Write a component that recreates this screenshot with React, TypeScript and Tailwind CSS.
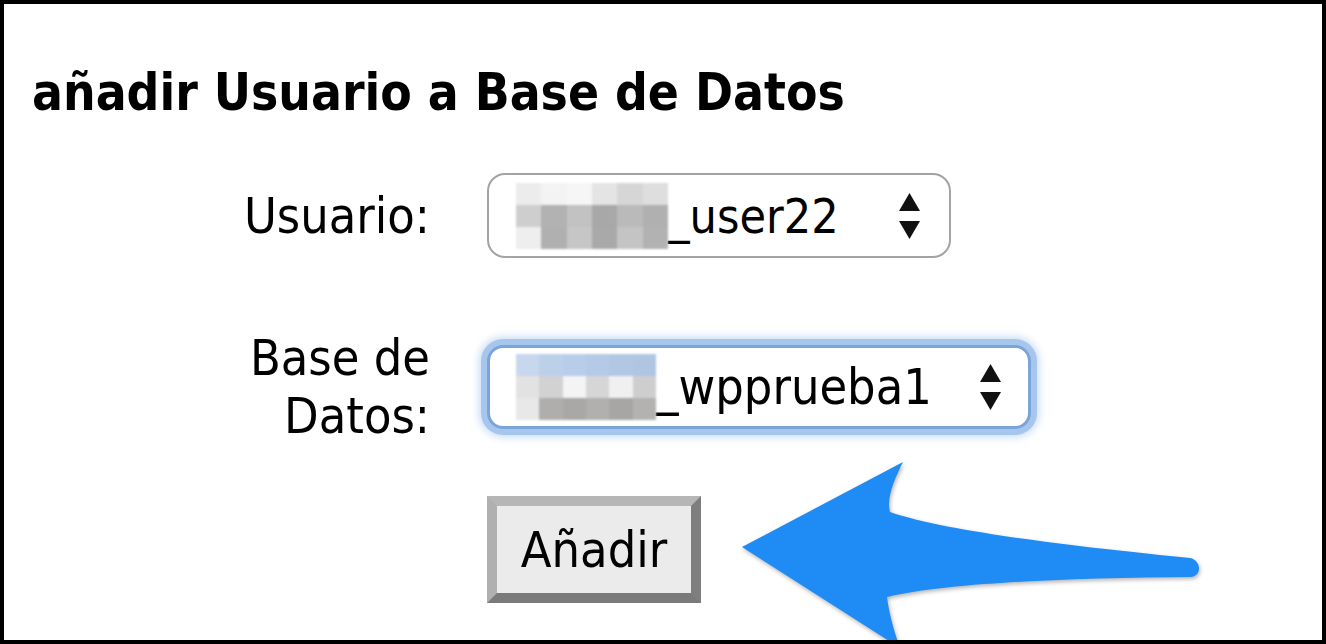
import React from 'react';

const userMosaic = [
  ['bg-[#ececec]', 'bg-[#f3f3f3]', 'bg-[#f6f6f6]', 'bg-[#e4e4e4]', 'bg-[#d6d6d6]', 'bg-[#dedede]'],
  ['bg-[#cecece]', 'bg-[#b2b2b2]', 'bg-[#c2c2c2]', 'bg-[#a8a8a8]', 'bg-[#bababa]', 'bg-[#b0b0b0]'],
  ['bg-[#eeeeee]', 'bg-[#b0b0b0]', 'bg-[#c6c6c6]', 'bg-[#a9a9a9]', 'bg-[#c4c4c4]', 'bg-[#b2b2b2]'],
];

const dbMosaic = [
  ['bg-[#c6d7ee]', 'bg-[#bdd0ea]', 'bg-[#b9cdea]', 'bg-[#b5cae6]', 'bg-[#b1c7e4]', 'bg-[#afc5e2]'],
  ['bg-[#e2e2e2]', 'bg-[#d2d2d2]', 'bg-[#f4f4f4]', 'bg-[#d6d6d6]', 'bg-[#f0f0f0]', 'bg-[#cecece]'],
  ['bg-[#e8e8e8]', 'bg-[#b0aeac]', 'bg-[#aaa8a6]', 'bg-[#b2b0ae]', 'bg-[#a8a6a4]', 'bg-[#b4b2b0]'],
];

// blurred-out prefix of the account name
const Mosaic = ({ rows, w }: { rows: string[][]; w: string }) => (
  <div className={`flex flex-col blur-[1px] ${w}`}>
    {rows.map((row, i) => (
      <div key={i} className="flex h-[22px]">
        {row.map((c, j) => (
          <div key={j} className={`flex-1 ${c}`} />
        ))}
      </div>
    ))}
  </div>
);

const Updown = () => (
  <svg width="21" height="46" viewBox="0 0 21 46" className="shrink-0">
    <path d="M10.5 0 L21 18 L0 18 Z" fill="#111" />
    <path d="M0 28 L21 28 L10.5 46 Z" fill="#111" />
  </svg>
);

const Arrow = () => (
  <svg
    className="absolute left-0 top-0 pointer-events-none drop-shadow-[1px_2px_2px_rgba(0,0,0,0.3)]"
    width="1318"
    height="636"
    viewBox="4 4 1318 636"
  >
    <path
      d="M742 547 L903 462 C895 478 886 498 890 512 C950 533 1100 549 1190 558 C1201 560 1203 576 1190 577 C1080 578 950 582 887 597 C889 612 893 628 900 648 L742 547 Z"
      fill="#1f8bf5"
    />
  </svg>
);

export default function App() {
  return (
    <div className="relative w-[1326px] h-[644px] overflow-hidden border-4 border-black bg-white text-[50px] leading-[58px] text-black font-['DejaVu_Sans_Condensed','DejaVu_Sans',sans-serif] font-stretch-condensed">
      <h1 className="mt-[60px] ml-[28px] text-[51px] font-bold">añadir Usuario a Base de Datos</h1>

      <div className="grid grid-cols-[426px_auto] gap-x-[57px] items-center">
        <div className="mt-[51px] text-right">Usuario:</div>
        <div className="mt-[51px] justify-self-start flex items-center h-[85px] pl-[27px] pr-[29px] rounded-[18px] border-2 border-[#a3a3a3] bg-white">
          <Mosaic rows={userMosaic} w="w-[152px]" />
          <span className="mr-[60px] text-[48px]">_user22</span>
          <Updown />
        </div>

        <div className="mt-[71px] text-right">
          Base de
          <br />
          Datos:
        </div>
        <div className="mt-[71px] justify-self-start flex items-center h-[84px] pl-[26px] pr-[27px] rounded-[16px] border-[3px] border-[#79a5db] bg-white shadow-[0_0_0_6px_#a7c6ed,0_0_9px_8px_#c6dbf4]">
          <Mosaic rows={dbMosaic} w="w-[140px]" />
          <span className="mr-[48px]">_wpprueba1</span>
          <Updown />
        </div>

        <div />
        <div className="mt-[51px] justify-self-start">
          <button className="w-[214px] h-[107px] bg-[#ebebeb] border-[10px] border-t-[#b6b6b6] border-l-[#b0b0b0] border-b-[#7a7a7a] border-r-[#7e7e7e]">
            Añadir
          </button>
        </div>
      </div>

      <Arrow />
    </div>
  );
}
